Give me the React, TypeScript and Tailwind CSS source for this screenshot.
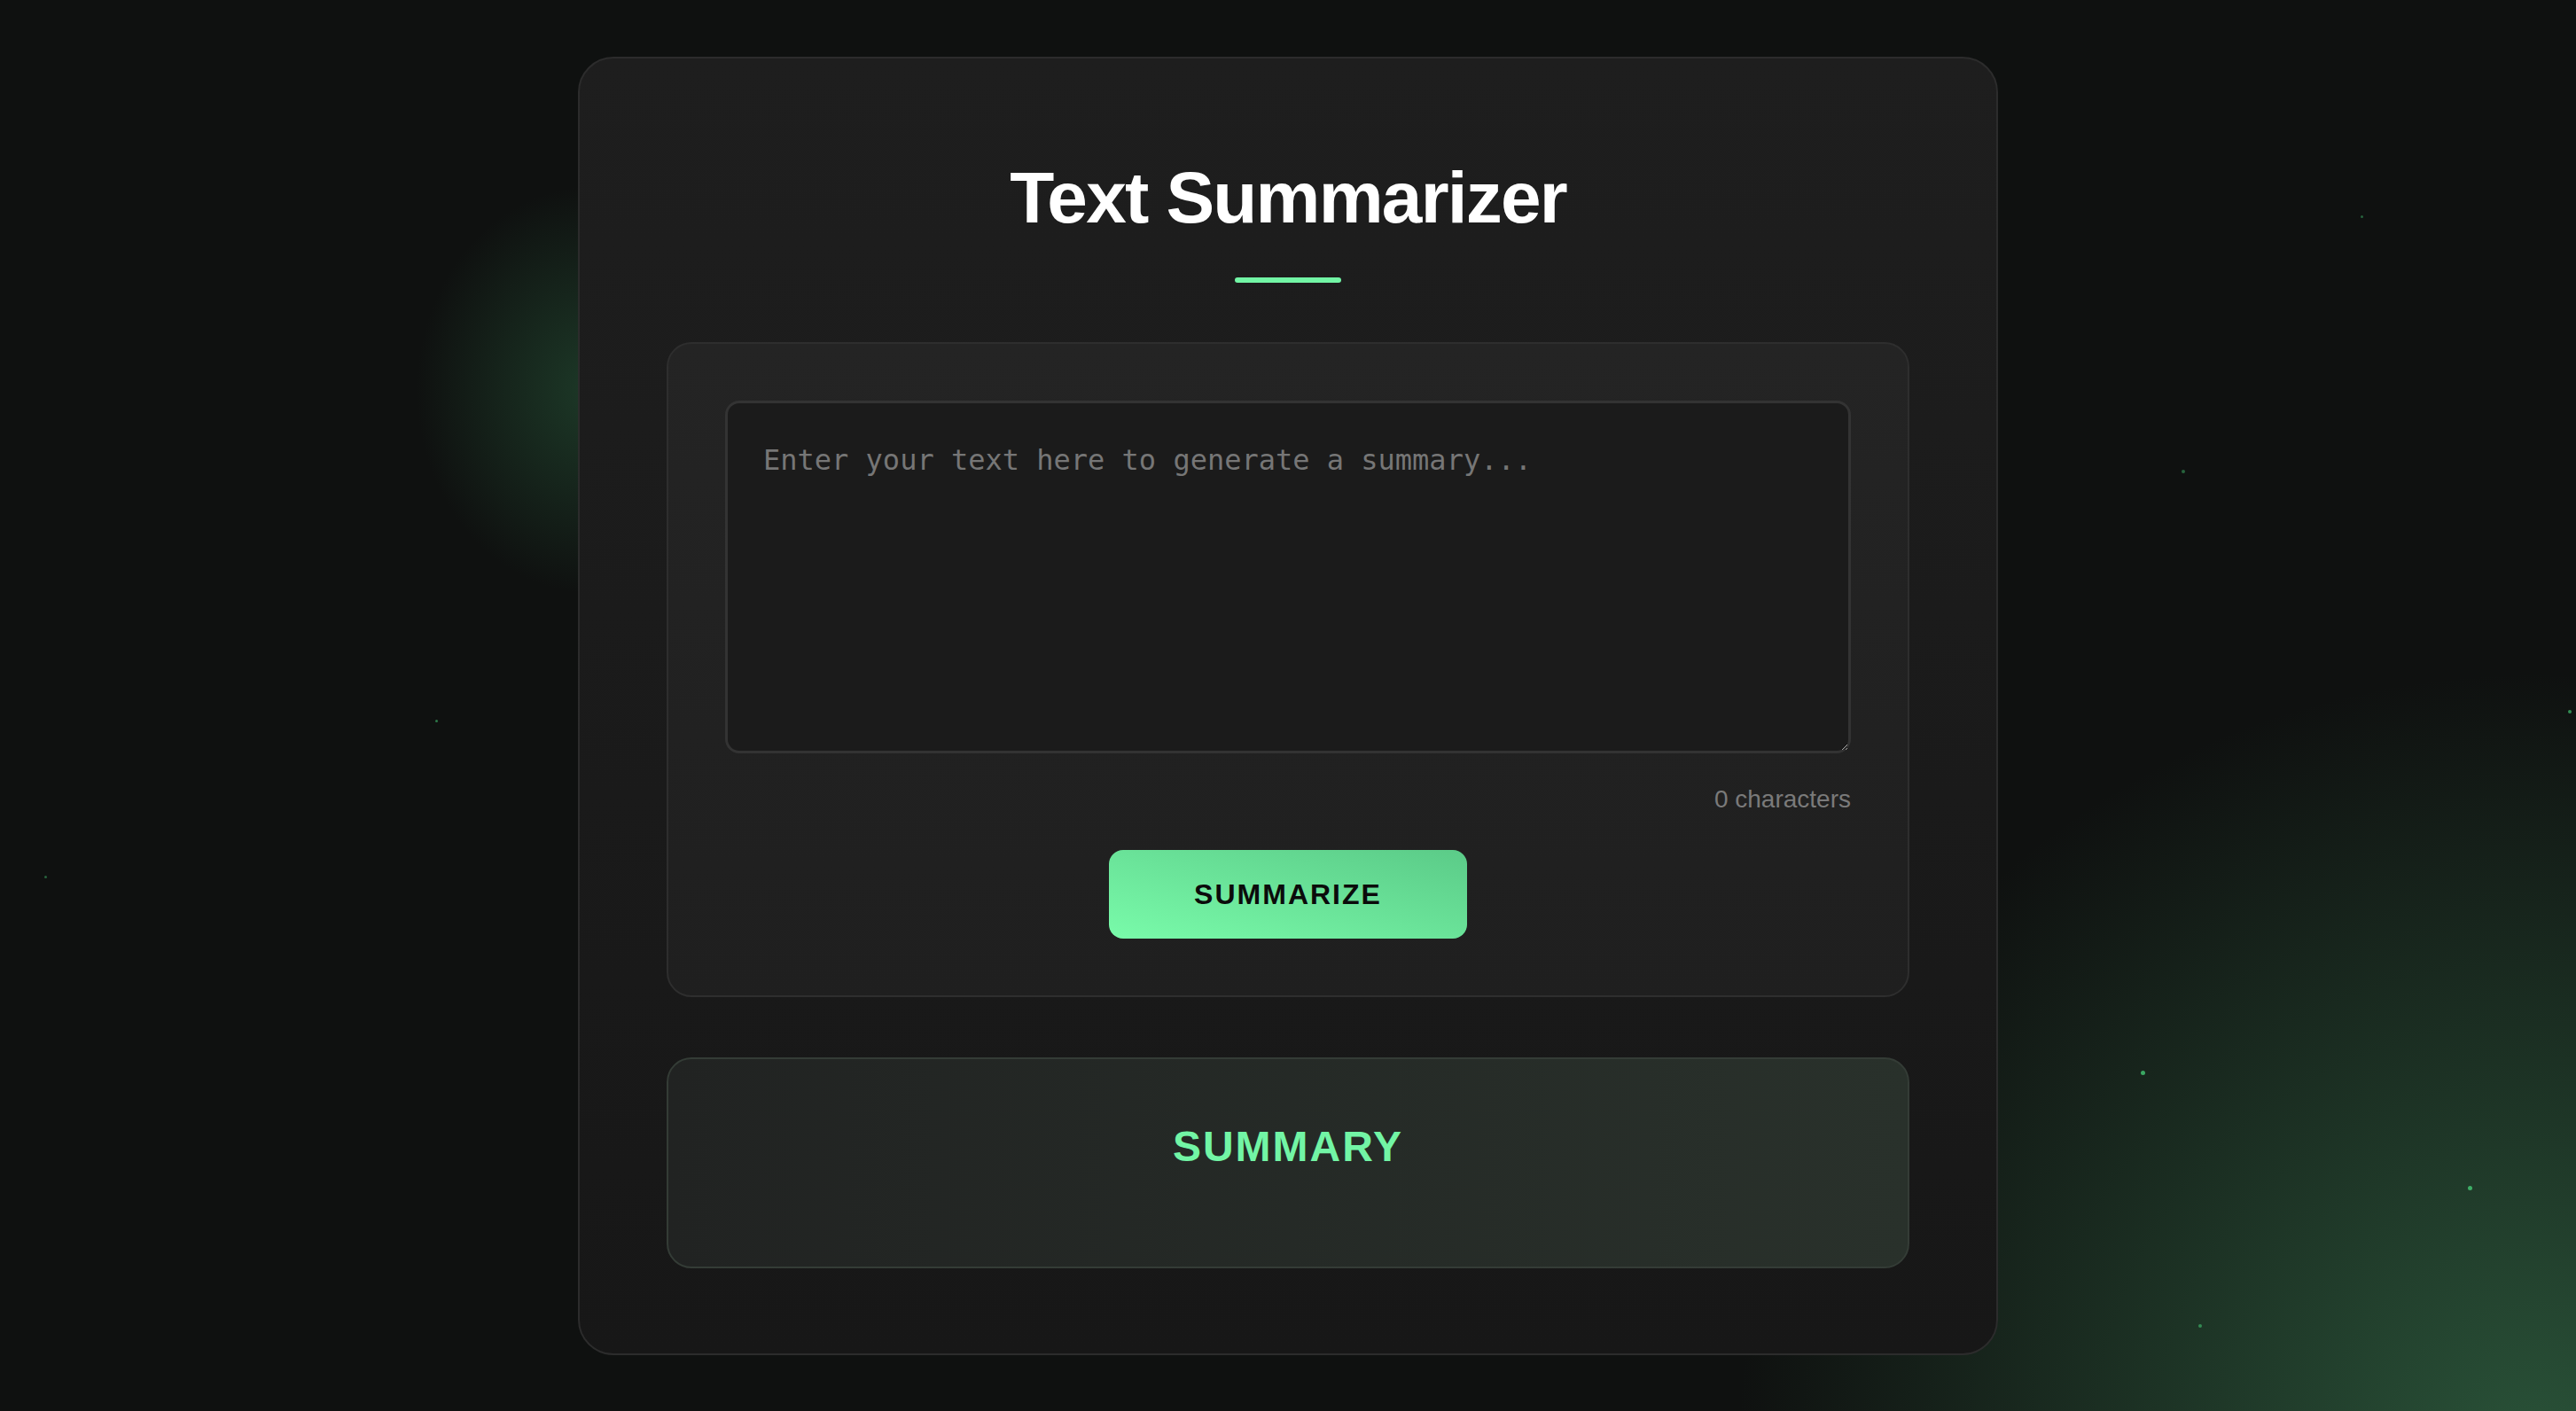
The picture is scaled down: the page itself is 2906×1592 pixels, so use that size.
import { useState } from "react";

const STARS = [
  { x: 2663, y: 243, s: 3, o: "opacity-40" },
  { x: 2461, y: 530, s: 4, o: "opacity-40" },
  { x: 491, y: 812, s: 3, o: "opacity-50" },
  { x: 50, y: 988, s: 3, o: "opacity-40" },
  { x: 2897, y: 801, s: 4, o: "opacity-60" },
  { x: 2415, y: 1208, s: 5, o: "opacity-70" },
  { x: 2784, y: 1338, s: 5, o: "opacity-70" },
  { x: 2480, y: 1494, s: 4, o: "opacity-50" },
];

export default function App() {
  const [text, setText] = useState("");

  return (
    <div className="relative min-h-screen w-full overflow-hidden bg-[#0f1110] bg-[radial-gradient(ellipse_200px_230px_at_670px_440px,rgba(36,78,52,0.65),transparent),radial-gradient(ellipse_900px_880px_at_2860px_1640px,rgba(48,98,66,0.8),transparent)] flex items-center justify-center font-['Liberation_Sans',Arial,sans-serif]">
      {/* floating particles */}
      {STARS.map((p, i) => (
        <span
          key={i}
          className={`absolute rounded-full bg-[#4ade80] ${p.o}`}
          style={{ left: p.x, top: p.y, width: p.s, height: p.s }}
        />
      ))}

      <div className="relative flex w-[1602px] flex-col items-center rounded-[40px] border-2 border-[#2c2c2c] bg-linear-to-b from-[#1e1e1e] to-[#171717] px-[98px] pt-[108px] pb-[96px]">
        <h1 className="text-[82px] font-bold leading-[98px] tracking-[-1.8px] text-white">
          Text Summarizer
        </h1>
        <div className="mt-[41px] h-[6px] w-[120px] rounded-full bg-[#72f5a5]" />

        {/* Input panel */}
        <div className="mt-[67px] flex w-full flex-col rounded-[28px] border-2 border-[#2e2e2e] bg-linear-to-b from-[#242424] to-[#1f1f1f] p-[64px]">
          <textarea
            value={text}
            onChange={(e) => setText(e.target.value)}
            placeholder="Enter your text here to generate a summary..."
            className="block h-[398px] w-full resize-y rounded-[16px] border-[3px] border-[#333333] bg-[#1b1b1b] p-[40px] font-['DejaVu_Sans_Mono',monospace] text-[32px] leading-[48px] text-[#dddddd] outline-none placeholder:text-[#767676]"
          />
          <div className="mt-[36px] text-right text-[28px] leading-[32px] text-[#7a7a7a]">
            {text.length} characters
          </div>
          <button className="mt-[41px] h-[100px] w-[404px] self-center rounded-[16px] bg-linear-to-tr from-[#79fbaa] to-[#5bcb88] text-[32px] font-bold tracking-[2px] text-[#0b0b0b]">
            SUMMARIZE
          </button>
        </div>

        {/* Summary panel */}
        <div className="mt-[68px] w-full rounded-[28px] border-2 border-[#343c36] bg-linear-to-r from-[#212322] to-[#29312b] pt-[70px] pb-[106px] text-center">
          <h2 className="text-[48px] font-bold leading-[58px] tracking-[2px] text-[#72f5a5]">
            SUMMARY
          </h2>
        </div>
      </div>
    </div>
  );
}
